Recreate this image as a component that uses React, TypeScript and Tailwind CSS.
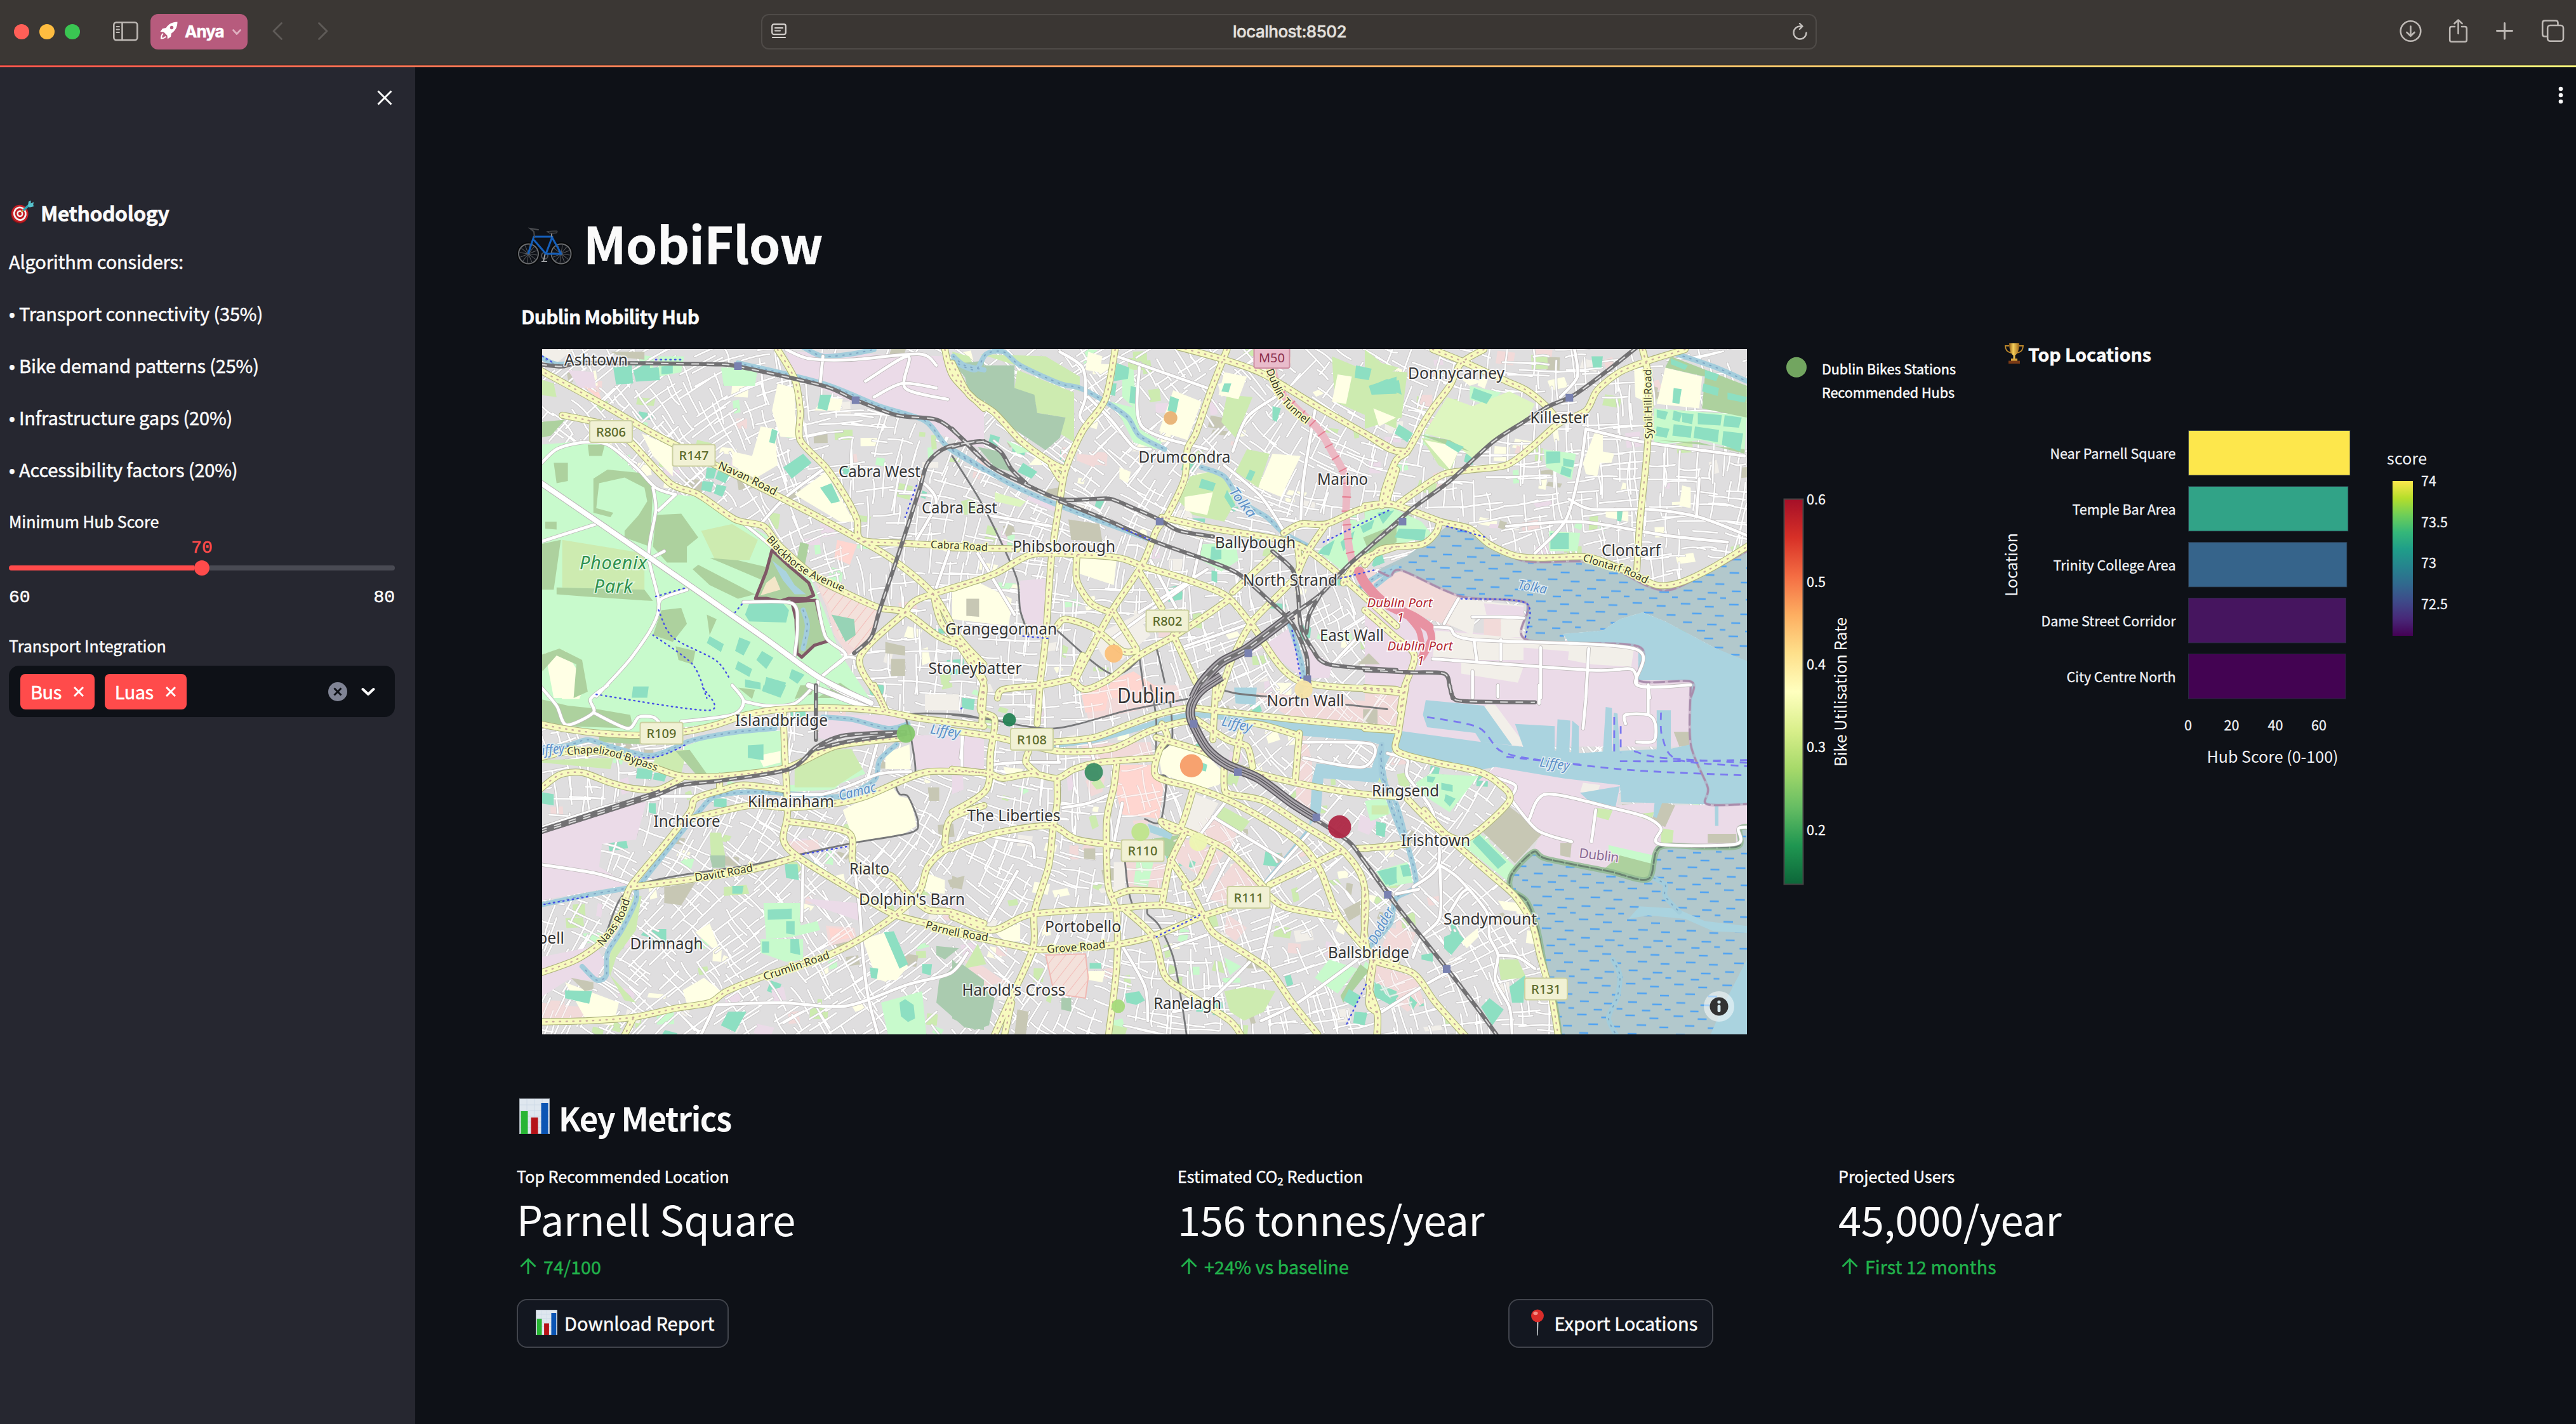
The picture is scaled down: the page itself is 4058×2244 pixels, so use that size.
import type { ReactNode } from "react";

/* ------------------------------------------------------------------ */
/* Map drawing                                                         */
/* ------------------------------------------------------------------ */

type TileId = "A" | "B" | "C" | "D" | "E" | "F";

// Each tile has its own finer coordinate system inside the map's plane.
const ORIGIN: Record<TileId, [number, number]> = {
  A: [850, 540],
  B: [1500, 540],
  C: [2150, 540],
  D: [850, 1080],
  E: [1500, 1080],
  F: [2150, 1080],
};

function points(tile: TileId, text: string): [number, number][] {
  const [ox, oy] = ORIGIN[tile];
  return text.split(" ").map((pair) => {
    const [x, y] = pair.split(",").map(Number);
    return [ox + x / 2.24, oy + y / 2.8];
  });
}

const r1 = (n: number) => Math.round(n * 10) / 10;

function polygon(tile: TileId, text: string) {
  return "M" + points(tile, text).map(([x, y]) => `${r1(x)},${r1(y)}`).join("L") + "Z";
}

function curve(tile: TileId, text: string) {
  const p = points(tile, text);
  let d = `M${r1(p[0][0])},${r1(p[0][1])}`;
  for (let i = 0; i < p.length - 1; i++) {
    const a = p[i - 1] ?? p[i];
    const b = p[i];
    const c = p[i + 1];
    const e = p[i + 2] ?? c;
    const k = 7;
    d += `C${r1(b[0] + (c[0] - a[0]) / k)},${r1(b[1] + (c[1] - a[1]) / k)} ${r1(c[0] - (e[0] - b[0]) / k)},${r1(c[1] - (e[1] - b[1]) / k)} ${r1(c[0])},${r1(c[1])}`;
  }
  return d;
}

type Shapes = Partial<Record<TileId, string[]>>;

function join(shapes: Shapes, build: (tile: TileId, text: string) => string) {
  return (Object.keys(shapes) as TileId[])
    .flatMap((tile) => (shapes[tile] ?? []).map((s) => build(tile, s)))
    .join("");
}

function random(seed: number) {
  let s = seed;
  return () => {
    s = (s * 1664525 + 1013904223) % 4294967296;
    return s / 4294967296;
  };
}

function sideStreets() {
  const rnd = random(11);
  let d = "";
  for (let y = 540; y < 1650; y += 21) {
    for (let x = 840; x < 2770; x += 25) {
      if (rnd() < 0.1) continue;
      const base = 0.55 * Math.sin(x / 260 + y / 520) + 0.5 * Math.cos(y / 190 - x / 700);
      const turn = rnd() < 0.5 ? 0 : Math.PI / 2;
      const t = base + turn + (rnd() - 0.5) * 0.12;
      const len = 22 + rnd() * 48;
      const px = x + rnd() * 12;
      const py = y + rnd() * 12;
      const qx = px + Math.cos(t) * len;
      const qy = py + Math.sin(t) * len;
      const bend = (rnd() - 0.5) * 10;
      d += `M${r1(px)},${r1(py)}Q${r1((px + qx) / 2 + bend)},${r1((py + qy) / 2 - bend)} ${r1(qx)},${r1(qy)}`;
    }
  }
  return d;
}

const PATCH_COLOURS = ["#c8facc", "#8ddfc2", "#cdebb0", "#ffffe5", "#f2dad9", "#ebdbe8", "#c7c7b4", "#f2efe9", "#ffffe5", "#cdebb0"];

function patches() {
  const rnd = random(5);
  return PATCH_COLOURS.map((fill) => {
    let d = "";
    for (let i = 0; i < 62; i++) {
      const x = 850 + rnd() * 1900;
      const y = 545 + rnd() * 1085;
      const w = 7 + rnd() * 22;
      const h = 6 + rnd() * 18;
      const k = (rnd() - 0.5) * 12;
      d += `M${r1(x)},${r1(y)}l${r1(w)},${r1(k)}l${r1(-k)},${r1(h)}l${r1(-w)},${r1(-k)}Z`;
    }
    return { fill, d };
  });
}

const COMMERCIAL: Shapes = {
  A: ["975,1060 1190,1180 1170,1300 1090,1380 1040,1290 1010,1160"],
  B: ["440,490 520,500 500,550 440,520", "1440,1000 1480,1000 1568,1100 1568,1200"],
  C: ["80,1030 130,1005 340,1120 300,1250 130,1180 40,1090", "420,1210 480,1215 480,1300 420,1290"],
  D: ["1010,1060 1110,1070 1120,1120 1020,1150", "0,1400 150,1420 160,1490 0,1470", "870,690 980,680 990,720 900,740"],
  E: ["450,0 800,0 800,60 720,90 620,120 480,150", "450,260 700,250 710,320 500,340", "610,780 760,790 730,900 620,910", "900,580 1010,640 980,720 830,640", "950,850 1010,760 1090,890 1000,980 900,940", "1060,30 1568,80 1568,190 1200,150", "330,1190 470,1185 480,1290 470,1380 360,1360", "40,1210 110,1240 190,1310 100,1330", "1230,170 1270,330 1270,600 1215,520 1210,250", "470,420 540,400 530,470 490,490", "780,660 960,740 900,860 780,770", "970,1010 1040,1070 1000,1130 960,1090"],
  F: ["30,1230 180,1290 210,1400 150,1440 40,1330", "90,1070 180,1090 150,1200 60,1150", "0,10 120,20 110,180 0,180"],
};

const RETAIL: Shapes = {
  A: ["1050,870 1120,890 1095,980 1040,950", "155,190 210,220 220,260"],
  E: ["580,350 710,350 720,390 750,410 730,590 680,580 600,570 580,480", "450,0 560,0 540,110 470,120"],
  B: ["550,1568 560,1490 640,1450 780,1568"],
  D: ["1020,1070 1100,1080 1110,1110 1030,1130"],
};

const LAND: { fill: string; shapes: Shapes }[] = [
  {
    fill: "#ebdbe8",
    shapes: {
      A: ["870,40 1440,60 1568,310 1568,470 1400,400 1330,320 1100,260 900,150", "100,120 190,130 200,200 140,200"],
      B: ["0,230 60,260 50,330 0,300", "240,1050 330,1040 325,1250 280,1280 240,1180", "1060,1370 1200,1250 1240,1480 1100,1350", "1255,1350 1340,1420 1330,1480 1255,1480", "280,670 380,720 370,750 260,690"],
      C: ["0,1150 200,1220 240,1260 560,1300 965,1340 965,1490 1150,1490 1150,1600 0,1600"],
      D: ["980,230 1000,130 1290,130 1290,200 1010,240", "1310,220 1568,220 1568,370 1330,370", "0,650 380,500 340,680 220,700 210,800 310,880 0,950", "930,940 1120,960 1130,1040 990,980", "0,1200 200,1150 230,1220 200,1300 100,1300 0,1380"],
      E: ["0,210 30,210 40,460 0,480", "1440,570 1500,600 1470,660 1430,640"],
      F: ["130,0 1150,0 1150,270 130,270", "400,420 460,360 905,440 890,530 1025,515 1030,580 1090,530 1400,525 1400,620 1320,625 1310,705 1040,710 1020,850 870,810 640,760 595,730 620,650 520,510 500,430"],
    },
  },
  { fill: "#f2dad9", shapes: COMMERCIAL },
  { fill: "#ffd6d1", shapes: RETAIL },
  {
    fill: "#f2efe9",
    shapes: {
      A: ["0,30 120,30 60,90 0,90"],
      B: ["490,1300 650,1200 700,1290 600,1400 540,1400", "640,1180 700,1200 650,1280"],
      C: ["330,1130 560,1160 560,1300 480,1300 480,1210 390,1210 380,1290 290,1240", "250,1270 950,1350 940,1430 800,1420 720,1400 400,1400 240,1385", "340,1410 560,1430 540,1500 340,1460"],
      D: ["1360,40 1480,40 1480,110 1360,110"],
      E: ["840,470 940,520 880,650 810,620", "570,780 610,780 610,900 570,900"],
      F: ["430,85 460,85 570,270 515,265 410,110", "770,430 830,440 820,480 760,470"],
    },
  },
  {
    fill: "#ebdbe8",
    shapes: { C: ["560,1360 560,1345 720,1362 715,1425 560,1405", "420,1150 560,1165 560,1205 430,1205"] },
  },
  {
    fill: "#c8facc",
    shapes: {
      A: ["0,450 150,435 240,450 330,560 420,640 480,670 560,680 700,780 800,850 860,920 960,1050 1010,1200 1060,1370 1170,1580 0,1580", "640,110 770,110 760,190 650,190", "420,60 510,60 500,130 420,150"],
      B: ["560,260 650,290 660,380 740,440 720,470 640,440 600,340", "1290,920 1430,790 1568,720 1568,900 1440,960 1380,1010", "870,890 1000,880 1010,960 950,1010 880,960", "190,430 280,480 230,490", "600,100 640,120 650,300 600,240"],
      C: ["0,740 100,730 200,790 240,850 150,880 0,920", "1020,290 1348,320 1340,480 1190,430 1020,450", "650,830 760,840 750,920 650,920", "630,470 745,490 730,605 640,550", "370,190 480,220 440,280 370,250"],
      D: ["0,0 1090,0 1180,100 990,90 860,95 700,130 600,170 350,210 200,200 0,150", "510,270 620,220 850,200 860,350 650,400 590,400 510,290", "790,960 930,960 920,1060 980,1040 990,1080 890,1110 800,1120", "1205,1400 1350,1350 1365,1545 1230,1545", "880,440 1050,440 1150,390 1130,350 1040,460 880,470", "780,1120 930,1120 930,1210 870,1220 780,1180"],
      E: ["1330,1210 1430,1250 1360,1360 1280,1290", "650,780 710,780 690,890 640,880", "960,1200 1020,1240 980,1280"],
      F: ["180,430 230,390 400,400 300,560 200,480", "395,640 530,800 500,860 340,700", "40,820 150,780 170,870 70,890", "0,510 70,500 100,560 20,600", "860,705 1020,750 1015,790 860,740"],
    },
  },
  {
    fill: "#cdebb0",
    shapes: {
      A: ["80,870 370,930 370,1090 80,1080", "570,830 680,800 770,870 740,960 620,960", "0,160 50,180 60,240 0,230"],
      B: ["100,50 330,60 450,150 450,215 300,130", "230,120 430,220 430,440 380,400 400,330 300,310 290,240 220,200", "840,590 940,560 1010,680 960,790 850,760 800,700", "1040,470 1120,490 1080,640 1000,570", "970,230 1060,240 1000,420 950,350", "1340,60 1568,180 1568,380 1350,260", "0,40 60,60 80,110 10,110"],
      C: ["0,120 150,130 130,330 0,380", "200,420 340,450 300,570 260,540", "0,30 60,90 120,110 0,200"],
      D: ["330,930 360,930 340,1080 270,1200 250,1280 340,1400 300,1390 240,1260 250,1180", "900,370 980,290 1100,280 1140,370 1040,450 900,450", "600,650 640,650 655,750 605,750", "420,290 520,285 500,390 400,345", "650,890 730,880 740,920 650,930", "0,330 260,320 250,370 0,340"],
      E: ["950,530 1050,600 1020,650 930,590", "960,1350 1040,1330 1140,1350 1100,1440 1030,1480 980,1440", "90,1140 120,1230 40,1250", "490,430 520,410 540,450 510,460", "1480,530 1540,530 1540,570 1480,570"],
      F: ["470,1210 540,1210 570,1290 480,1300", "815,540 875,550 860,595 815,580", "1045,630 1090,640 1085,695 1045,695", "910,465 980,465 990,515 905,510", "945,570 1020,560 1010,600"],
    },
  },
  { fill: "#def6c0", shapes: { C: ["210,400 290,240 380,280 510,215 600,270 570,340 490,400 380,510 300,430"], B: ["150,660 260,700 240,725 150,700"] } },
  {
    fill: "#ffffe5",
    shapes: {
      A: ["840,180 900,200 905,420 850,415 820,300", "360,400 470,460 470,590 400,500", "780,370 830,380 840,540 760,600 680,540 680,480 750,500", "900,670 1010,570 1110,790 1060,790", "1000,240 1070,250 1060,300 970,300", "20,1370 90,1360 150,1480 130,1568 50,1568", "1450,1130 1568,1080 1568,1140"],
      B: ["780,210 880,260 830,430 730,390", "1130,490 1230,500 1160,680 1080,640", "960,130 1040,150 1010,250 940,230", "0,1100 80,1050 210,1130 200,1250 0,1220", "450,950 580,960 570,1070 450,1020", "480,40 530,60 520,130 470,120", "820,680 920,660 900,760 820,740", "590,550 630,570 620,620 590,600", "300,500 320,540 270,540", "1360,140 1410,150 1390,270 1340,260"],
      C: ["1060,110 1190,150 1180,290 1030,270", "810,400 840,400 840,480 880,490 870,530 830,530 820,590 780,580 770,530", "950,110 990,120 990,260 955,240", "210,430 290,450 330,480 300,560", "30,290 110,330 50,370", "1120,630 1150,640 1150,730 1110,720", "850,740 930,740 930,790 850,770", "330,150 420,170 370,190"],
      D: ["1070,550 1240,440 1270,490 1310,500 1330,620 1280,660 1110,690", "1140,1120 1220,1090 1300,1240 1260,1300 1190,1300", "505,1345 580,1290 640,1350 590,1400 520,1405", "550,1090 600,1050 630,1150 610,1160", "90,1310 280,1400 260,1500 170,1490", "1370,830 1430,860 1430,920 1360,910", "1220,300 1305,260 1310,370 1220,370", "770,310 850,290 850,340 790,360", "50,0 160,0 140,60 80,60"],
      E: ["725,290 780,260 900,310 970,400 940,440 880,460 740,390", "150,1090 240,1050 240,1130 190,1130", "180,360 250,370 240,400 190,390", "480,1260 540,1260 530,1310 480,1300"],
      F: ["470,950 540,960 545,1000 490,990", "0,920 40,930 30,960", "340,1130 400,1070 400,1110 360,1160"],
    },
  },
  {
    fill: "#add19e",
    shapes: {
      A: ["190,600 240,560 360,575 400,640 390,900 300,860 300,830 350,760 380,700 370,640 300,595 210,620 200,730 260,750 250,770 190,750", "410,760 500,755 560,860 520,900 520,970 450,970 400,900", "0,890 75,870 50,1090 0,1090", "60,1080 370,1090 400,1140 160,1120 60,1110", "560,980 760,1110 700,1130 600,1070 540,1000", "430,1180 500,1170 520,1240 470,1320 400,1290", "50,530 100,530 100,610 60,620", "170,450 230,450 220,500 175,500", "480,1340 550,1360 540,1420 490,1400", "0,1380 70,1350 150,1400 170,1540 120,1568 130,1420 60,1380 10,1450", "590,1200 625,1220 600,1290", "20,790 60,790 60,825 20,820", "0,350 90,340 40,410 0,420", "600,950 700,960 800,990 790,1050 640,970", "920,880 950,890 935,990 905,970", "1140,1568 1060,1500 980,1568"],
      B: ["1450,860 1568,800 1568,880 1480,950"],
      C: ["1080,60 1348,190 1348,330 1190,290 1200,150 1060,110", "1030,430 1340,470 1340,490 1180,440", "190,405 300,430 370,480 290,450"],
      D: ["0,60 100,90 180,100 320,130 330,190 90,180 0,160", "480,290 530,285 590,390 550,390", "700,10 760,20 750,60", "920,0 970,0 960,40 900,60", "210,225 380,230 360,260 210,250"],
      E: ["690,680 800,660 770,760 750,750", "1440,1230 1470,1260 1380,1400 1370,1370"],
      F: ["900,750 1020,790 1005,855 840,815"],
    },
  },
  {
    fill: "#aacbaf",
    shapes: {
      B: ["10,100 220,100 220,200 290,230 300,310 400,330 380,420 330,475 170,340 70,190", "90,460 170,480 210,570 150,550"],
      A: ["1490,90 1568,80 1568,290 1510,200"],
      D: ["1480,1220 1568,1300 1568,1520 1500,1510 1400,1400 1410,1300", "600,750 655,750 655,805 610,805", "1400,1150 1480,1160 1430,1210 1400,1190"],
      E: ["0,1210 150,1380 130,1500 80,1520 0,1470", "385,1380 420,1380 420,1440 385,1430"],
    },
  },
  {
    fill: "#c7c7b4",
    shapes: {
      F: ["500,525 630,650 530,785 410,640", "1040,510 1095,530 1060,625 1010,600", "1090,205 1145,205 1145,270 1110,270", "1210,655 1310,655 1310,695 1210,695", "690,695 730,695 725,760 690,750", "0,105 45,110 45,175 0,165"],
      D: ["440,890 550,870 500,970 440,960", "110,1290 190,1310 190,1340 160,1350", "1440,860 1500,840 1490,900 1450,890", "1370,450 1410,450 1410,510 1375,510"],
      A: ["1220,1320 1290,1340 1290,1380 1220,1370", "1240,1395 1290,1395 1290,1470 1240,1470", "1510,1130 1550,1130 1550,1210 1510,1200", "250,40 370,40 370,75 290,65"],
      B: ["50,1130 95,1130 95,1210 50,1205", "1470,1370 1510,1420 1430,1420", "410,780 520,800 530,880 420,870"],
      E: ["0,840 40,860 0,900", "1380,990 1440,950 1440,1010 1400,1040", "230,1430 270,1440 260,1540 220,1540", "1450,105 1500,105 1500,170 1450,165", "465,720 505,720 505,770 465,765"],
    },
  },
  {
    fill: "#8ddfc2",
    shapes: {
      A: ["260,110 325,100 330,180 270,185", "330,120 420,108 425,165 340,172", "430,105 470,100 470,135 430,140", "990,230 1030,230 1015,300 980,290", "590,550 625,555 615,600 585,600", "630,565 670,585 655,620 620,600", "575,610 615,615 605,660 570,650", "625,625 660,635 645,680 615,665", "860,550 930,490 960,530 890,600", "990,640 1030,620 1060,700 1030,710", "740,1150 860,1150 880,1180 870,1235 740,1230 725,1200", "600,1295 650,1330 640,1365 590,1325", "705,1300 745,1320 720,1380 690,1360", "785,1360 825,1390 800,1440 765,1400", "700,1405 750,1440 740,1475 690,1440", "725,1485 780,1500 780,1530 725,1520", "800,1475 870,1500 850,1560 790,1530", "890,1440 935,1465 910,1505 880,1480", "1060,1200 1120,1240 1090,1310", "1070,1200 1115,1220 1090,1290 1050,1240", "820,380 840,390 830,445 810,440"],
      B: ["580,90 625,110 620,160 570,170", "555,180 580,180 575,235 555,230", "630,190 655,200 650,270 625,265", "770,235 800,250 790,310 760,300", "250,530 300,570 280,600 230,570", "880,600 930,620 920,655 870,640", "970,650 1000,720 985,730 960,680", "960,180 985,180 975,220 950,215", "1425,100 1480,115 1470,165 1420,155", "1470,190 1568,150 1568,225 1480,230", "1130,280 1160,290 1145,350 1130,340", "1050,560 1070,570 1055,610 1035,600", "1310,900 1350,870 1330,940 1290,930", "1370,880 1420,830 1410,880 1380,920", "1440,810 1490,780 1480,820 1450,840", "1500,750 1560,740 1520,800", "1490,950 1520,930 1510,980 1480,985", "915,900 950,900 950,955 910,960", "915,1005 935,1010 935,1060 915,1050"],
      C: ["100,170 120,165 130,230 80,200", "20,190 80,160 90,220 30,230", "385,200 450,230 430,270 375,245", "120,360 170,400 150,440 105,400", "1090,200 1118,205 1110,270 1085,265", "640,480 690,480 690,530 640,535", "700,510 740,520 735,550 700,545", "695,545 730,560 725,595 690,580", "1030,295 1070,305 1060,340 1030,330", "1090,300 1120,310 1110,350 1085,340", "1120,310 1160,315 1155,360 1120,350", "1175,310 1260,320 1255,365 1175,360", "1270,320 1330,330 1320,375 1265,370", "1090,360 1155,370 1150,420 1085,410", "1165,370 1250,385 1245,440 1160,420", "1265,390 1335,400 1325,480 1260,450", "1030,370 1075,380 1065,420 1025,410", "1195,180 1250,200 1245,235 1190,215", "1280,220 1348,240 1340,265 1280,250", "1080,70 1140,100 1130,120 1080,95", "1200,120 1250,140 1240,170 1200,155", "120,820 215,825 210,875 105,860", "655,840 720,840 720,910 655,910", "890,740 910,740 905,790 890,785", "290,430 350,460 330,485 285,450", "30,950 60,930 70,970 30,990", "800,60 840,60 835,110 805,110"],
      D: ["790,0 870,0 850,55 785,25", "330,5 385,5 380,55 325,55", "735,265 790,260 790,330 735,320", "345,365 400,370 395,415 340,410", "405,385 450,390 440,425 400,415", "805,990 890,985 890,1030 805,1035", "870,1040 900,1040 900,1100 870,1095", "785,1130 810,1130 810,1180 785,1180", "885,1120 915,1120 920,1190 885,1180", "865,790 910,790 915,860 870,850", "385,520 410,520 410,570 385,560", "615,500 660,500 660,540 615,535", "1215,1090 1250,1085 1300,1230 1270,1250", "90,1345 185,1350 175,1405 90,1380", "665,1440 730,1440 690,1530 640,1500", "1270,1400 1290,1385 1320,1410 1325,1470 1300,1485 1275,1460", "1350,1230 1385,1230 1380,1280 1350,1270", "0,470 50,480 50,530 0,520", "680,885 720,885 715,920 680,920", "1490,55 1530,60 1525,90 1490,90", "1165,1245 1195,1250 1190,1295 1170,1290"],
      E: ["35,60 80,60 75,110 35,100", "880,340 900,350 895,380 880,375", "610,1360 660,1350 680,1390 650,1410 615,1400", "1490,1310 1568,1350 1568,1410 1490,1370", "1420,1440 1465,1445 1455,1500 1415,1490", "1400,1340 1440,1370 1420,1420 1380,1390", "1500,820 1568,800 1568,870 1530,880", "370,1210 390,1210 390,1240 370,1240", "485,1225 525,1225 525,1250 485,1250", "840,770 860,780 850,810 835,800"],
      F: ["400,655 500,780 470,810 380,690", "75,820 105,810 115,870 85,885", "125,795 155,790 165,840 135,845", "280,1110 325,1085 350,1120 305,1190 280,1160", "410,1420 440,1380 490,1430 450,1500", "40,1310 120,1370 90,1410 30,1370", "510,1330 565,1280 560,1400 520,1400", "160,1370 185,1400 170,1430 155,1410", "220,400 250,405 240,430 220,425", "270,430 310,440 310,470 270,460", "285,480 320,500 300,535 280,510", "40,600 75,610 70,670 40,660", "200,1190 240,1180 240,1220 200,1210"],
    },
  },
];

const MUD: Shapes = {
  C: ["290,810 350,820 430,870 530,950 600,968 760,965 860,985 1000,1075 1060,1090 1200,1020 1400,870 1400,1450 1240,1350 1060,1230 980,1190 900,1220 840,1270 700,1285 710,1325 565,1315 570,1150 340,1120 130,1005 80,1030 50,1000 150,940"],
  F: ["595,735 640,765 860,820 1000,855 1040,715 1200,720 1325,705 1325,625 1400,620 1400,1568 690,1568 670,1400 640,1280 610,1080 570,950 515,900 520,830"],
};

const WATER: Shapes = {
  C: ["700,1285 840,1270 900,1220 980,1190 1060,1230 1240,1350 1400,1430 1400,1580 1150,1580 1150,1490 965,1490 965,1340 720,1325"],
  F: [
    "0,170 120,200 410,250 560,272 760,300 860,290 1080,280 1150,260 1150,0 1400,0 1400,525 1210,525 905,515 900,440 700,410 460,360 380,380 250,330 130,290 50,260 0,240",
    "215,65 420,90 520,265 410,250 390,210 220,185 205,130",
    "530,170 670,180 670,290 560,275",
    "680,150 725,155 722,295 675,295",
    "732,155 755,180 755,300 728,300",
    "850,95 872,100 872,300 840,300",
    "878,120 892,125 900,300 875,300",
    "1030,110 1080,110 1080,285 1030,285",
    "930,1030 970,975 1100,985 1200,1040 1400,1070 1400,1095 1230,1085 1130,1030 1000,1015",
    "1400,1120 1348,1210 1270,1400 1210,1568 1400,1568",
    "760,475 900,445 885,535 790,510",
    "1235,530 1248,530 1248,620 1236,620",
    "1022,520 1050,515 1030,585 1018,580",
  ],
  E: [
    "340,262 500,235 650,180 760,135 850,118 1000,130 1210,165 1568,205 1568,262 1500,250 1210,220 940,150 850,140 760,160 620,215 500,255 340,280",
    "1510,245 1568,250 1500,430 1310,410 1300,560 1260,620 1270,420 1285,345 1480,365",
    "690,610 780,650 770,680 700,650",
    "995,10 1075,10 1070,85 1000,80",
  ],
  A: ["820,960 870,1010 900,1070 940,1110 900,1110 860,1050"],
};

const RIVERS: Shapes = {
  A: ["0,60 60,95 160,85", "700,90 1000,180 1200,280 1360,345 1440,460 1568,560", "930,20 1000,60 1100,50 1180,30", "1460,60 1500,100 1568,120", "930,1180 945,1250 930,1350"],
  B: ["0,80 80,120 120,50 180,40 240,100 380,180 450,200 540,260 620,330 660,410 750,470", "880,550 960,590 1020,700 1110,770 1170,840 1260,900", "0,470 200,620 380,720 700,870", "1190,1240 1230,1400 1240,1490 1220,1568", "1440,1080 1500,1030 1568,990"],
  C: ["1100,50 1240,110 1348,170", "40,1070 90,1020"],
  D: ["0,280 100,265 170,240 250,270 380,310 450,290 520,250 600,225 700,205 830,190", "1000,140 1100,150 1230,190 1300,170", "0,970 150,930 310,895", "340,900 340,950 290,1080 240,1180 235,1280 200,1300 150,1240", "360,870 480,680 560,560 620,490 750,470 900,480 1060,490 1180,420 1200,330 1260,260", "930,765 1130,925"],
  E: ["1510,300 1540,500 1600,700", "1260,640 1100,880"],
  F: ["60,260 60,400 110,520 150,700 180,880 110,940 90,1050 20,1150", "1020,850 1060,880 1060,930 1110,1000", "875,1210 900,1280 890,1380 860,1470 900,1568"],
};

const STREETS: Shapes = {
  A: ["0,540 60,470 150,440 240,450 340,550 410,640 480,670", "400,640 410,740 385,940 420,1180 330,1380 200,1560", "480,670 420,740", "0,880 200,800", "980,1140 1010,1300 1080,1380 990,1480 975,1568", "720,1145 890,1150 910,1250 900,1380", "780,800 870,680 1010,550", "1340,600 1400,700 1330,870", "1400,1080 1450,900", "870,30 950,70 1100,75 1340,50 1400,100", "990,1480 1080,1390 1130,1400", "420,1180 430,1130 520,1090", "380,960 440,920", "560,680 700,780 820,900", "1150,170 1300,60 1290,200 1440,250", "1180,240 1280,180 1400,200", "1000,60 990,180"],
  B: ["380,40 460,110 470,240 450,320 470,360", "480,240 560,340 640,460 700,470", "580,60 900,200", "960,540 1090,680 1170,830", "1140,240 1040,330 990,480", "880,870 850,1040", "660,1190 900,1000", "560,1310 680,1200 850,1050", "790,1170 700,960", "1050,1240 820,1340", "660,110 670,370 900,470", "1340,1420 1460,1260", "120,760 350,810", "90,930 220,1200", "1280,300 1240,600 1230,780"],
  C: ["740,30 750,150 690,240", "720,690 800,735 1000,735 1180,770 1348,850", "780,380 760,550 710,780 600,930", "240,1255 300,1260 380,1310 950,1350 960,1510 1150,1510", "385,1310 395,1400", "240,1395 800,1445 940,1440 960,1510", "480,1310 480,1400", "280,1240 330,1130", "620,1345 620,1568", "1000,1510 1005,1568", "790,1350 780,1568", "780,380 990,440 1340,500", "500,810 760,790 1060,850 1280,880", "380,1210 480,1210 560,1215", "1180,600 1170,770", "380,1450 380,1568"],
  D: ["0,0 60,90 95,175 190,120 180,60 240,0", "190,120 310,190 350,140 400,140 420,160", "500,160 680,130 720,70 680,0", "720,70 800,90 900,80 970,0", "1020,0 1170,100", "430,490 560,490", "880,480 1000,480 1100,440 1200,390 1310,380", "930,770 925,1040", "1110,790 1130,1000 1140,1180 1160,1380 1200,1568", "620,1410 850,1400 1080,1415 1300,1320 1450,1270 1510,1180", "560,1568 620,1410", "0,630 250,530 420,500", "1190,260 1160,400", "1490,220 1490,370", "0,790 200,830 330,880"],
  E: ["140,350 240,340 380,340", "40,200 30,320", "480,230 500,330", "390,540 480,520 560,480", "920,580 1170,770", "980,490 880,650", "1100,880 1260,650", "130,1040 230,820", "600,1150 680,1330 690,1480", "900,1100 740,1170", "1050,1220 900,1400 780,1440", "1430,1210 1220,1400 1090,1480", "1140,960 1090,1230", "60,650 200,680 280,700 290,760", "370,250 375,340", "1240,250 1480,260 1450,360 1240,320", "600,520 560,760", "900,950 960,800 1010,700"],
  F: ["520,510 610,640 730,690", "580,590 640,480 870,540 990,580 1045,630 1040,700 1310,700 1320,630 1400,630", "80,300 150,330 150,400 240,560 260,790 170,890", "260,790 330,850 430,1000 440,1110 470,1190 460,1300 510,1420 520,1540", "265,800 265,1020 200,1110 170,1200", "470,1190 540,1200 600,1250", "1000,0 1000,130", "920,170 920,130 1000,130 1025,170 1020,245 960,250", "780,60 770,190", "420,390 530,440 510,500", "60,1440 290,1270 340,1330", "615,0 615,80", "470,0 470,50", "380,0 380,50", "190,900 110,920", "300,1000 340,920 360,900", "815,550 800,690"],
};

const AVENUES: Shapes = { A: ["0,615 390,950 790,1300 990,1480 1170,1590"], D: ["950,0 1180,110"] };

const MAIN_ROADS: Shapes = {
  A: ["0,120 220,270 400,400 620,540 830,670 1000,780 1130,870 1250,960 1390,1110 1480,1300 1568,1420", "80,320 160,340 250,370 330,450 460,620 560,670 690,780 790,810 850,900 980,1040 1090,1110 1200,1170 1290,1190 1400,1290 1470,1330", "840,30 900,160 920,300 920,430 1010,550 1080,680 1120,780 1135,870 1280,885 1568,905", "1290,1190 1130,1390 1200,1568 1220,1620", "1290,1190 1340,1130 1568,1040", "1430,30 1460,150 1568,290", "1390,1110 1420,1240 1520,1380 1568,1490"],
  B: ["0,90 60,230 150,310 240,430 350,530 400,560", "575,30 540,250 460,390 400,560 380,700 350,950 330,1300 310,1500", "970,30 910,220 860,400 830,470 820,600 760,760 720,830 670,980 560,1190 470,1400 430,1500", "800,20 960,75 1100,140 1300,290 1568,480", "740,770 900,815 1160,870 1260,920 1400,1060 1568,1250", "0,905 230,910", "0,1085 150,1020 280,935 440,935 590,950 670,985 840,1050 970,1120 1060,1250 1220,1490 1568,1530", "1170,840 1230,800 1320,800 1430,740 1530,710 1568,720", "1530,710 1568,560", "1320,800 1250,930 1200,1050 1060,1230 990,1390 940,1568", "660,1010 740,1170", "370,1250 400,1220 500,1260 600,1360 650,1360", "570,1190 650,1350", "980,1130 900,1200 790,1290 660,1380 560,1480 470,1530 430,1480 460,1380", "440,940 440,1050 490,1150 560,1190", "1130,940 990,1100", "1220,910 1225,1000 1200,1050", "780,1290 860,1500", "0,1290 60,1400 110,1500 110,1568", "160,1568 180,1530 320,1510 430,1480", "1380,1060 1440,960 1568,900", "350,540 380,600"],
  C: ["240,30 340,80 500,170 570,210 640,280 680,340", "420,30 340,90 300,190 240,290 200,370 150,480 110,520 70,650 60,720", "0,400 90,470 150,480", "1130,30 1000,80 900,130 820,210 780,300 680,360 590,460 500,540 380,560 280,580 200,640 120,710", "980,30 1000,150 1000,400 990,560 970,800 960,1000", "0,720 100,715 270,790 370,820 440,890 530,940 620,950 780,945 870,980 960,1030 1030,1070 1110,1060 1230,990 1400,860", "0,980 60,910 200,890 250,840 265,790", "0,1180 100,1290 175,1380 140,1520 125,1620", "0,1530 140,1545"],
  D: ["0,170 80,190 200,210 350,220 510,205 620,175 730,130 860,105 1050,100 1210,115 1340,145 1568,180", "0,320 110,290 250,300 400,360 500,400 650,400 850,370 920,340 1040,270 1170,245 1300,230", "0,460 70,395 150,385 250,430 330,455 420,460 500,410", "860,120 865,300 875,560 860,680 910,755 1110,910 1250,1010 1400,1060 1568,1110", "0,1270 130,1210 230,1120 290,1000 320,890 430,720 530,560 550,500 650,460 720,440 870,460", "320,890 540,855 760,810 900,760", "530,590 740,530 880,540 1050,520 1150,490 1280,420 1380,380 1568,385", "880,600 1090,650 1110,790 1240,840 1300,920 1370,990 1450,1000 1568,1050", "0,1485 170,1480 330,1465 480,1425 600,1400 660,1350 800,1280 1000,1200 1130,1120 1260,1010 1340,910 1370,800 1440,720 1568,670", "330,1470 290,1568", "1568,530 1450,590 1430,700", "635,400 635,450", "1180,0 1220,110", "1568,0 1560,180"],
  E: ["0,370 130,390 180,410 280,390 370,410 430,370 520,340 720,320", "110,0 100,110 150,150 135,300 120,460 0,560", "310,0 300,170", "370,410 370,520 355,640 340,800 290,1000 285,1160 200,1400 140,1568", "0,200 160,230 370,290 560,280 700,200 800,165 850,155", "360,250 500,230 620,175 720,130 830,100 920,110 1200,150 1568,195", "930,0 920,240", "740,170 760,230 730,290 720,400 850,450 960,500 1100,590 1230,700 1300,820 1360,1010 1450,1150 1480,1180", "720,230 880,290 960,340 1050,380 1250,440 1450,480 1568,490", "860,150 970,240 1040,270 1060,360", "1000,330 1040,170 1220,220", "960,340 960,450 980,480 1100,510 1230,610 1370,720 1440,830 1460,950 1450,1150", "580,350 570,450 545,600 550,880 580,1000 580,1250 550,1560", "0,720 70,680 200,640 350,620 440,680 600,710", "850,460 800,640 740,600 930,700 1000,760 1100,890", "1430,720 1568,710", "1370,730 1120,880", "820,650 770,780 740,970", "770,770 830,880 880,1000 920,1090 1030,1180 1120,1260 1200,1400 1290,1540", "920,720 870,860 820,890", "570,930 630,905 740,910", "0,1020 140,1080 280,1010 570,985 740,970 880,1010", "1120,930 1180,980 1350,1020", "980,980 880,1020 700,1110 540,1150 340,1165 270,1160 0,1090", "610,990 710,1110 750,1280 820,1350 980,1480 1030,1568", "1225,210 1210,430", "1490,1190 1470,1400 1500,1450 1500,1560", "1480,1180 1568,1220", "270,290 260,340 300,390", "210,1400 180,1568"],
  F: ["0,10 140,25", "145,0 120,200 115,290 250,340 400,380 470,430 510,510 370,670 290,660 210,550", "0,190 120,200", "150,500 220,590 320,700 440,830 530,930 590,1050 620,1200 660,1380 685,1568", "0,720 150,700", "0,900 0,1100 30,1210 170,1270 250,1400 370,1568", "30,1210 15,1330 45,1450 40,1568"],
};

const RAIL: Shapes = {
  A: ["0,95 80,105 160,90 600,95 700,105 1000,190 1110,250 1260,320 1400,340 1480,410 1568,520", "1568,435 1440,460 1370,530 1340,650 1270,920 1200,1180 1170,1300 1110,1370"],
  B: ["0,380 130,540 250,620 380,690 500,690 560,690 640,730 730,780 800,830 920,855", "0,460 100,435 170,480 210,560 260,620", "380,700 560,790 720,880 900,960 1010,1020 1120,1140 1200,1240 1250,1380 1255,1490", "1568,800 1400,980 1300,1110 1200,1200 1040,1350 950,1410 880,1500", "1130,920 1200,1000 1220,1100 1230,1250 1270,1350 1330,1420 1568,1445", "1300,1110 1260,1200 1250,1280"],
  C: ["960,20 870,110 740,230 650,280 560,350 450,440 300,610 160,740 0,920", "0,1445 160,1455 280,1460 300,1520 310,1568"],
  D: ["0,650 200,570 420,480 500,440 640,420 880,370 980,270 1080,220 1290,205", "0,640 200,560 420,470", "980,280 1100,245 1290,215", "975,0 975,240"],
  E: ["1280,590 1400,690 1450,770 1540,920 1568,970"],
  F: ["0,780 80,920 200,1110 290,1250 400,1430 480,1568", "300,0 310,50 350,70 600,75"],
};

const WIDE_RAIL: Shapes = {
  E: ["950,-40 880,20 850,70 840,120 850,170 900,280 970,350 1080,410 1200,520 1290,590"],
  B: ["1200,1200 1040,1350 950,1410 880,1500 850,1568"],
};

const TRAM: Shapes = {
  B: ["0,500 100,700 180,900 230,1050 240,1180 270,1290", "370,1270 570,1465 700,1345 720,1345 750,1500", "660,1380 680,1568"],
  D: ["1568,150 1490,130 1305,130 1310,220 1325,390 1260,430 1270,480 1300,490 1335,600 1310,650 1110,695 920,745 760,790 330,890 210,1140 0,1275"],
  E: ["0,130 130,150 360,190 620,110 830,60", "700,0 720,150 720,380 755,410 735,600 680,590", "610,780 620,890 640,975 685,980 690,1010 730,1060 780,1200 810,1400 830,1568", "770,80 775,240 720,300", "900,0 1000,35 1120,50", "1390,85 1535,105"],
};

const PATHS: Shapes = {
  A: ["410,1120 520,1080", "420,1180 470,1300 620,1400 670,1480", "400,1290 540,1420 590,1568", "690,1190 720,1145", "1330,630 1290,770", "410,75 510,75", "10,60 50,90"],
  B: ["600,820 700,870", "1310,880 1540,740", "1200,1270 1230,1480", "1370,1040 1500,1000", "250,1295 340,1305"],
  C: ["340,1130 570,1150 565,1310", "290,810 430,860"],
  D: ["200,40 600,110 570,0", "0,970 180,930", "100,270 380,320 520,260", "930,745 1090,710", "1490,100 1480,110"],
  E: ["720,1110 880,1010", "1460,1320 1390,1500"],
};

const FERRIES: Shapes = {
  F: ["220,140 400,185 480,290 620,330 900,370 1100,385 1400,400", "900,335 1100,335 1400,328", "880,140 880,300", "903,180 903,300", "1045,120 1050,230 1110,330 1400,360", "950,290 1050,320 1400,345", "500,315 760,350"],
};

const BOUNDARY: Shapes = {
  C: ["50,1010 90,1030 130,1005 340,1120 570,1150 570,1310 965,1340 965,1490 1150,1495 1150,1568", "290,810 350,820 430,870 530,950 600,968 760,965 860,985 1000,1075 1080,1090 1200,1020 1348,920"],
  F: ["1150,0 1150,260 1210,450 1210,525 1400,520"],
};

const COAST: Shapes = { F: ["1400,625 1325,630 1320,708 1200,715 1040,715 1000,855 860,820 640,765 595,735 520,830 515,900 570,950 610,1080 640,1280 670,1400 690,1568"] };

const STATIONS: [number, number][] = [
  [1162.5, 577], [1347.8, 630.7], [1826.8, 822], [1966.5, 1029.3], [2059.4, 1070.4], [2472.3, 626.8],
  [2209.4, 822], [1880.4, 1140.7], [1950, 1216.8], [2073.7, 1288.2], [2186.2, 1410], [2279, 1527],
];

const PLACES: [string, number, number, number, number?][] = [
  ["Ashtown", 939, 576, 100],
  ["Cabra West", 1385.5, 752, 129],
  ["Cabra East", 1511.5, 809, 119],
  ["Grangegorman", 1577, 1000, 176],
  ["Stoneybatter", 1536, 1062, 147],
  ["Drumcondra", 1866, 729, 145],
  ["Marino", 2115, 764, 80],
  ["Phibsborough", 1676, 870, 162],
  ["Ballybough", 1977.5, 864, 127],
  ["North Strand", 2032.5, 923, 149],
  ["East Wall", 2129.5, 1010, 101],
  ["Dublin", 1806, 1107.5, 92, 33],
  ["North Wall", 2056.5, 1113, 122],
  ["Donnycarney", 2294, 597, 152],
  ["Killester", 2456.5, 667, 92],
  ["Clontarf", 2569.5, 876, 93],
  ["Islandbridge", 1231, 1143.5, 146],
  ["Kilmainham", 1246, 1272, 136],
  ["Inchicore", 1082, 1303, 105],
  ["Rialto", 1369.5, 1377.5, 63],
  ["Dolphin's Barn", 1436.5, 1425.5, 167],
  ["Drimnagh", 1050, 1496, 115],
  ["bell", 868, 1487, 42],
  ["The Liberties", 1597, 1294, 147],
  ["Portobello", 1706, 1468.5, 120],
  ["Harold's Cross", 1597, 1568.5, 163],
  ["Ranelagh", 1870.5, 1590, 107],
  ["Ballsbridge", 2156, 1510, 128],
  ["Ringsend", 2214, 1255, 106],
  ["Irishtown", 2261.5, 1333, 109],
  ["Sandymount", 2347.5, 1457, 147],
];

const ROAD_NAMES: [string, TileId, string, number][] = [
  ["Navan Road", "A", "628,555 720,605 860,695", 17.5],
  ["Blackhorse Avenue", "A", "800,870 860,950 940,1025 1085,1108 1180,1160", 16.5],
  ["Cabra Road", "A", "1380,908 1460,910 1640,925", 16.5],
  ["Dublin Tunnel", "B", "1108,122 1145,230 1200,310 1300,410", 16.5],
  ["Sybil Hill Road", "C", "1016,424 1012,250 1010,60", 16.5],
  ["Clontarf Road", "C", "768,962 850,995 920,1020 1030,1090", 16.5],
  ["Chapelizod Bypass", "D", "98,308 200,300 300,330 450,395", 16.5],
  ["Davitt Road", "D", "550,864 650,845 790,812", 17],
  ["Naas Road", "D", "222,1152 290,1040 330,905", 17],
  ["Crumlin Road", "D", "795,1302 900,1258 1060,1188", 17],
  ["Parnell Road", "D", "1360,1070 1460,1105 1640,1140", 17],
  ["Grove Road", "E", "335,1180 440,1172 600,1150", 17],
];

const WATER_NAMES: [string, number, number, number, number][] = [
  ["Tolka", 2413, 932, 10, 46],
  ["Tolka", 1952, 796, 52, 54],
  ["Liffey", 1488, 1159, 8, 47],
  ["Liffey", 1947, 1148, 12, 48],
  ["Liffey", 2448, 1211, 8, 47],
  ["Camac", 1352, 1254, -14, 60],
  ["Dodder", 2182, 1462, -62, 62],
  ["iffey", 872, 1188, -6, 36],
];

const SHIELDS: [string, number, number][] = [
  ["R806", 962.5, 680], ["R147", 1093, 717.5], ["R802", 1839, 978.5], ["R109", 1042, 1155.5], ["R108", 1625.5, 1165],
  ["R110", 1800, 1340.5], ["R111", 1967, 1414], ["R131", 2435.5, 1558.5],
];

const BIKES: { x: number; y: number; r: number; fill: string }[] = [
  { x: 1844, y: 658.6, r: 10.7, fill: "#e8b274" },
  { x: 1754.5, y: 1030, r: 14.2, fill: "#fbbf78" },
  { x: 2053.6, y: 1086.5, r: 14.2, fill: "#f6e3a6" },
  { x: 1427, y: 1156, r: 14.4, fill: "#85c76d" },
  { x: 1590, y: 1134.3, r: 10.5, fill: "#258255" },
  { x: 1723, y: 1216.8, r: 14.4, fill: "#3a8d63" },
  { x: 1877, y: 1206.8, r: 18.2, fill: "#f79d68" },
  { x: 2110.3, y: 1303, r: 18.2, fill: "#ae2745" },
  { x: 1796.5, y: 1311, r: 14.2, fill: "#bfe48b" },
  { x: 1887.5, y: 1327, r: 14.2, fill: "#edf5b2" },
  { x: 1761.6, y: 1585.7, r: 10.6, fill: "#a5da7a" },
];

const SIDE_STREETS = sideStreets();
const PATCHES = patches();

function DublinMap() {
  const main = join(MAIN_ROADS, curve);
  const streets = join(STREETS, curve);
  const avenues = join(AVENUES, curve);
  const rail = join(RAIL, curve);
  const wideRail = join(WIDE_RAIL, curve);
  const tram = join(TRAM, curve);
  const rivers = join(RIVERS, curve);
  const tunnel = curve("B", "1130,110 1160,220 1290,380 1340,480 1390,600 1390,750 1400,900 1420,1000");
  const line = { fill: "none", strokeLinejoin: "round", strokeLinecap: "round" } as const;
  return (
    <svg viewBox="854 550 1898 1080" className="block h-[1080px] w-[1898px]" fontFamily="'Noto Sans', sans-serif">
      <defs>
        <pattern id="mud" width="76" height="50" patternUnits="userSpaceOnUse" patternTransform="rotate(1)">
          <rect width="76" height="50" fill="#b2c8cc" />
          <path d="M4,5h15M42,9h14M22,20h15M58,23h14M8,34h14M46,37h15M30,47h13M66,45h9" stroke="#4fa3f3" strokeWidth="2.4" />
        </pattern>
        <pattern id="hatch" width="13" height="13" patternUnits="userSpaceOnUse" patternTransform="rotate(38)">
          <rect width="13" height="13" fill="#f3e1db" />
          <path d="M0,0V13" stroke="#f3bcb8" strokeWidth="2" />
        </pattern>
        <clipPath id="centre">
          <path d={join({ E: COMMERCIAL.E, D: COMMERCIAL.D, F: COMMERCIAL.F }, polygon) + join(RETAIL, polygon)} />
        </clipPath>
      </defs>
      <rect x="854" y="550" width="1898" height="1080" fill="#dfdedf" />
      {PATCHES.map((p, i) => (
        <path key={i} d={p.d} fill={p.fill} />
      ))}
      <g {...line}>
        <path d={SIDE_STREETS} stroke="#c9c7c7" strokeWidth="4.2" />
        <path d={SIDE_STREETS} stroke="#ffffff" strokeWidth="2.6" />
      </g>
      {LAND.map((l, i) => (
        <path key={i} d={join(l.shapes, polygon)} fill={l.fill} />
      ))}
      <g {...line} clipPath="url(#centre)" opacity="0.7">
        <path d={SIDE_STREETS} stroke="#e0cdcb" strokeWidth="3.4" />
        <path d={SIDE_STREETS} stroke="#ffffff" strokeWidth="2" />
      </g>
      <path d={polygon("A", "980,1070 1190,1180 1170,1290 1120,1360 1060,1300 1020,1160")} fill="url(#hatch)" />
      <path d={polygon("A", "1030,1200 1110,1220 1115,1290 1080,1320")} fill="#97d3b6" />
      <path d={polygon("E", "330,1190 470,1185 480,1290 470,1380 360,1360")} fill="url(#hatch)" stroke="#f0b9b4" strokeWidth="2" />
      <g fill="#acd0a0" stroke="#7f5866" strokeWidth="5" strokeLinejoin="round">
        <path d={polygon("A", "820,915 880,985 950,1060 967,1115 940,1130 880,1128 850,1140 800,1128 762,1128 800,1010")} />
        <path d={polygon("A", "890,1142 975,1137 990,1220 1015,1318 970,1335 925,1388 908,1370 905,1220")} />
      </g>
      <path d={polygon("A", "800,1060 830,1030 850,1090 780,1115")} fill="#f3e6c8" />
      <path d={join(MUD, polygon)} fill="url(#mud)" />
      <path d={join(WATER, polygon)} fill="#aad3df" />
      <path d={rivers} stroke="#a3cddc" strokeWidth="8" {...line} />
      <path d={rivers} stroke="#7fa6c4" strokeWidth="2" strokeDasharray="2 9" {...line} />
      <g {...line}>
        <path d={join(COAST, curve)} stroke="#8fb98e" strokeWidth="9" opacity="0.8" />
        <path d={join(COAST, curve)} stroke="#6a8372" strokeWidth="3" strokeDasharray="16 4" />
        <path d={join(BOUNDARY, curve)} stroke="#b197b3" strokeWidth="4.5" opacity="0.45" />
        <path d={join(BOUNDARY, curve)} stroke="#a98dac" strokeWidth="3" strokeDasharray="16 7" />
        <path d={streets} stroke="#bdb9b9" strokeWidth="6.2" />
        <path d={streets} stroke="#ffffff" strokeWidth="4.6" />
        <path d={avenues} stroke="#b9b6b6" strokeWidth="10" />
        <path d={avenues} stroke="#ffffff" strokeWidth="8" />
        <path d={tram} stroke="#77787a" strokeWidth="2.8" />
        <path d={tunnel} stroke="#ecb9c4" strokeWidth="12" />
        <path d={tunnel} stroke="#e57f92" strokeWidth="14" strokeDasharray="2 20" strokeLinecap="butt" />
        <path d={main} stroke="#aeb37c" strokeWidth="11" />
        <path d={main} stroke="#f7fabf" strokeWidth="8.8" />
        <path d={main} stroke="#c9ab9d" strokeWidth="2.4" strokeDasharray="1.5 9" />
        <path d={curve("C", "-20,1010 0,1060 60,1140 170,1210 225,1255")} stroke="#e892a2" strokeWidth="16" />
        <path d={curve("C", "130,1180 190,1270 205,1380")} stroke="#e892a2" strokeWidth="9" />
        <path d={curve("C", "225,1255 235,1310 200,1390")} stroke="#e892a2" strokeWidth="12" />
        <path d={wideRail} stroke="#5f5c62" strokeWidth="15" strokeLinecap="butt" />
        <path d={wideRail} stroke="#aaa6ac" strokeWidth="11" strokeLinecap="butt" />
        <path d={wideRail} stroke="#5f5c62" strokeWidth="5" strokeLinecap="butt" />
        <path d={wideRail} stroke="#b3afb5" strokeWidth="1.6" strokeLinecap="butt" />
        <path d={rail} stroke="#727173" strokeWidth="6.6" />
        <path d={rail} stroke="#dcdcdc" strokeWidth="2" strokeDasharray="12 12" strokeLinecap="butt" />
        <path d={join(PATHS, curve)} stroke="#4550e6" strokeWidth="2.4" strokeDasharray="1.5 6" />
        <path d={join(FERRIES, curve)} stroke="#7b79f0" strokeWidth="2.8" strokeDasharray="12 9" strokeLinecap="butt" />
      </g>
      {STATIONS.map(([x, y], i) => (
        <rect key={i} x={x - 6} y={y - 6} width="12" height="12" fill="#7981b0" />
      ))}
      <g fill="#3b3a2c" stroke="#f7fabf" strokeWidth="4" paintOrder="stroke" strokeLinejoin="round">
        {ROAD_NAMES.map(([name, tile, d, size], i) => (
          <g key={name}>
            <path id={`road-${i}`} d={curve(tile, d)} fill="none" stroke="none" />
            <text fontSize={size}>
              <textPath href={`#road-${i}`}>{name}</textPath>
            </text>
          </g>
        ))}
      </g>
      <g fontSize="21" fontStyle="italic" fill="#5b8fc7" stroke="#e3eef3" strokeWidth="3" paintOrder="stroke" textAnchor="middle">
        {WATER_NAMES.map(([name, x, y, a, w], i) => (
          <text key={i} transform={`translate(${x} ${y}) rotate(${a})`} textLength={w} lengthAdjust="spacingAndGlyphs">
            {name}
          </text>
        ))}
      </g>
      <text transform="translate(2518 1355) rotate(7)" fontSize="21" fill="#8a6a94" stroke="#f1e6ef" strokeWidth="3" paintOrder="stroke" textAnchor="middle" textLength="63">
        Dublin
      </text>
      <g fontSize="20" fontStyle="italic" fill="#b2252f" stroke="#ffffff" strokeWidth="3.5" paintOrder="stroke" textAnchor="middle">
        <text x="2205" y="957" textLength="103" lengthAdjust="spacingAndGlyphs">Dublin Port</text>
        <text x="2206" y="980">1</text>
        <text x="2237" y="1025" textLength="103" lengthAdjust="spacingAndGlyphs">Dublin Port</text>
        <text x="2238" y="1048">1</text>
      </g>
      <g fontSize="29" fontStyle="italic" fill="#2f9150" stroke="#e9fbe9" strokeWidth="3" paintOrder="stroke" textAnchor="middle">
        <text x="966" y="897" textLength="106">Phoenix</text>
        <text x="966" y="933.5" textLength="61">Park</text>
      </g>
      <g fill="#353535" stroke="#ffffff" strokeOpacity="0.75" strokeWidth="4" paintOrder="stroke" strokeLinejoin="round" textAnchor="middle">
        {PLACES.map(([name, x, y, w, size]) => (
          <text key={name} x={x} y={y} fontSize={size ?? 25} textLength={w} lengthAdjust="spacingAndGlyphs">
            {name}
          </text>
        ))}
      </g>
      <g fontSize="20" fill="#5c6b2b" stroke="none" textAnchor="middle" fontWeight="500">
        {SHIELDS.map(([name, x, y]) => (
          <g key={name}>
            <rect x={x - 33.5} y={y - 17} width="67" height="34" rx="3" fill="#f1f1d4" stroke="#cbd0a0" strokeWidth="2" />
            <text x={x} y={y + 7.5} textLength="47" lengthAdjust="spacingAndGlyphs">
              {name}
            </text>
          </g>
        ))}
      </g>
      <rect x="1975.5" y="540" width="56" height="40" rx="3" fill="#e9bccb" stroke="#cf8ea2" strokeWidth="2" />
      <text x="2003.5" y="571" fontSize="20" fill="#8b2f4c" textAnchor="middle" textLength="41">
        M50
      </text>
      {BIKES.map((b) => (
        <circle key={`${b.x}`} cx={b.x} cy={b.y} r={b.r} fill={b.fill} fillOpacity="0.95" />
      ))}
      <circle cx="2708" cy="1586" r="24" fill="#ffffff" fillOpacity="0.5" />
      <circle cx="2708" cy="1586" r="14.5" fill="#333333" />
      <circle cx="2708" cy="1579" r="2.6" fill="#d6e9ee" />
      <rect x="2705.6" y="1583.5" width="4.8" height="11.5" rx="2" fill="#d6e9ee" />
    </svg>
  );
}

/* ------------------------------------------------------------------ */
/* Emoji-like pictures                                                 */
/* ------------------------------------------------------------------ */

function ChartPicture({ className }: { className: string }) {
  return (
    <svg viewBox="0 0 48 56" preserveAspectRatio="none" className={className}>
      <rect width="48" height="56" fill="#a9b0b8" />
      <rect x="1" y="1" width="46" height="54" fill="#dfe7ef" />
      <path d="M1,10H47M1,19H47M1,28H47M1,37H47M1,46H47M12,1V55M24,1V55M36,1V55" stroke="#c9d8e6" strokeWidth="0.8" />
      <rect x="2.5" y="20" width="11" height="36" fill="#28b534" />
      <rect x="18.5" y="30" width="11" height="26" fill="#b51318" />
      <rect x="34.5" y="7" width="11" height="49" fill="#0b55b4" />
    </svg>
  );
}

function TargetPicture() {
  return (
    <svg viewBox="0 0 42 42" className="-mt-[2px] h-[38px] w-[42px]">
      <g transform="translate(17 24) rotate(-12)">
        <ellipse rx="15" ry="16" cx="-1" cy="1" fill="#7e1519" />
        <ellipse rx="14.5" ry="15.5" fill="#c41f25" />
        <ellipse rx="11.5" ry="12.5" fill="#f3f1f0" />
        <ellipse rx="8.5" ry="9.5" fill="#c41f25" />
        <ellipse rx="5.5" ry="6" fill="#f3f1f0" />
        <ellipse rx="2.8" ry="3.2" fill="#c41f25" />
      </g>
      <path d="M19,21 34,9" stroke="#d8b24a" strokeWidth="2" />
      <path d="M24,17 33,9" stroke="#2f9fb0" strokeWidth="4" strokeLinecap="round" />
      <path d="M31,11 32,3 36,1 36,6 41,4 40,9 42,11 34,13Z" fill="#57c2cc" />
    </svg>
  );
}

function BikePicture() {
  const spokes = [0, 30, 60, 90, 120, 150];
  return (
    <svg viewBox="815 364 88 61" className="mt-[12px] h-[61px] w-[88px]" fill="none">
      {[832.5, 884].map((cx) => (
        <g key={cx}>
          <circle cx={cx} cy="406" r="17" stroke="#060708" strokeWidth="2.5" />
          <circle cx={cx} cy="406" r="15.5" stroke="#6b6d70" strokeWidth="1.9" />
          {spokes.map((a) => (
            <path key={a} d={`M${cx - 14},406h28`} stroke="#5a5c60" strokeWidth="1" transform={`rotate(${a + 8} ${cx} 406)`} />
          ))}
        </g>
      ))}
      <circle cx="858" cy="409" r="5" stroke="#4e5055" strokeWidth="2" />
      <path d="M859,405 856,418M853,418h9" stroke="#9b9da0" strokeWidth="2" />
      <path d="M832,406 841,379H870L860,406 841,384M868,377 884,406H860" stroke="#1560bd" strokeWidth="3" strokeLinejoin="round" />
      <path d="M842,380 841,371 835,366 848,368" stroke="#4a4c50" strokeWidth="2" strokeLinecap="round" />
      <path d="M861,371C867,370 873,370 878,370L877,373 867,374Z" fill="#1d1f22" stroke="#505257" />
      <path d="M869,374V379" stroke="#85878b" strokeWidth="2" />
    </svg>
  );
}

function PinPicture() {
  return (
    <svg viewBox="0 0 24 42" className="-mt-[3px] h-[42px] w-[24px]">
      <path d="M11,16h2.6L12.8,41 12,42 11.3,41Z" fill="#b9bdc1" />
      <circle cx="12" cy="10.5" r="10" fill="#d92d2a" />
      <ellipse cx="9" cy="6.5" rx="3.6" ry="2.8" fill="#f58f84" />
    </svg>
  );
}

/* ------------------------------------------------------------------ */
/* Charts                                                              */
/* ------------------------------------------------------------------ */

const RATES: [string, number][] = [["0.6", 794.5], ["0.5", 924.5], ["0.4", 1054.5], ["0.3", 1184.8], ["0.2", 1315.5]];

function UtilisationLegend() {
  return (
    <svg viewBox="2752 540 400 900" className="block h-[900px] w-[400px]" fill="#fafafa">
      <defs>
        <linearGradient id="rate" x1="0" y1="0" x2="0" y2="1">
          <stop offset="0" stopColor="#a50f28" />
          <stop offset="0.1" stopColor="#d73027" />
          <stop offset="0.2" stopColor="#f46d43" />
          <stop offset="0.3" stopColor="#fdae61" />
          <stop offset="0.4" stopColor="#fee08b" />
          <stop offset="0.5" stopColor="#ffffbf" />
          <stop offset="0.6" stopColor="#d9ef8b" />
          <stop offset="0.7" stopColor="#a6d96a" />
          <stop offset="0.8" stopColor="#66bd63" />
          <stop offset="0.9" stopColor="#1f9651" />
          <stop offset="1" stopColor="#0d6639" />
        </linearGradient>
      </defs>
      <circle cx="2830" cy="578.8" r="16" fill="#72a560" />
      <g fontSize="21.5" stroke="#fafafa" strokeWidth="0.5">
        <text x="2870" y="589.5" textLength="211">Dublin Bikes Stations</text>
        <text x="2870" y="627" textLength="209">Recommended Hubs</text>
      </g>
      <rect x="2810.5" y="786.5" width="30" height="607" fill="url(#rate)" stroke="#444444" strokeWidth="2" />
      <g fontSize="21.5" stroke="#fafafa" strokeWidth="0.3">
        {RATES.map(([t, y]) => (
          <text key={t} x="2846" y={y} textLength="30">{t}</text>
        ))}
      </g>
      <text transform="translate(2909 1208) rotate(-90)" fontSize="25" textLength="235">Bike Utilisation Rate</text>
    </svg>
  );
}

const BARS: { name: string; width: number; label: number; fill: string }[] = [
  { name: "Near Parnell Square", width: 254.5, label: 198, fill: "#fde74c" },
  { name: "Temple Bar Area", width: 251.5, label: 163, fill: "#31a387" },
  { name: "Trinity College Area", width: 249.5, label: 193, fill: "#36648b" },
  { name: "Dame Street Corridor", width: 248, label: 212, fill: "#46155f" },
  { name: "City Centre North", width: 247.5, label: 172, fill: "#430352" },
];

function LocationsChart() {
  return (
    <svg viewBox="3152 600 800 700" className="block h-[700px] w-[800px]" fill="#f0f2f6" stroke="none">
      <defs>
        <linearGradient id="score" x1="0" y1="0" x2="0" y2="1">
          <stop offset="0" stopColor="#fde74c" />
          <stop offset="0.11" stopColor="#b5de2b" />
          <stop offset="0.22" stopColor="#6ece58" />
          <stop offset="0.33" stopColor="#35b779" />
          <stop offset="0.44" stopColor="#1f9e89" />
          <stop offset="0.56" stopColor="#26828e" />
          <stop offset="0.67" stopColor="#31688e" />
          <stop offset="0.78" stopColor="#3e4989" />
          <stop offset="0.89" stopColor="#482878" />
          <stop offset="1" stopColor="#440154" />
        </linearGradient>
      </defs>
      {BARS.map((b, i) => (
        <g key={b.name}>
          <rect x="3447.5" y={678.5 + i * 88} width={b.width} height="70.5" fill={b.fill} stroke="#283442" strokeWidth="0.8" />
          <text x="3427.5" y={722.5 + i * 88} fontSize="21.5" textAnchor="end" textLength={b.label} stroke="#f0f2f6" strokeWidth="0.3">{b.name}</text>
        </g>
      ))}
      <g fontSize="21.5" textAnchor="middle" stroke="#f0f2f6" strokeWidth="0.3">
        <text x="3447" y="1151">0</text>
        <text x="3515.5" y="1151">20</text>
        <text x="3584.5" y="1151">40</text>
        <text x="3653" y="1151">60</text>
      </g>
      <text x="3580" y="1202" fontSize="25" textAnchor="middle" textLength="207">Hub Score (0-100)</text>
      <text transform="translate(3178 940) rotate(-90)" fontSize="25" textLength="100">Location</text>
      <text x="3760" y="732" fontSize="25" textLength="63">score</text>
      <rect x="3769" y="758" width="32" height="244" fill="url(#score)" />
      <g fontSize="21.5" stroke="#f0f2f6" strokeWidth="0.3">
        <text x="3814" y="765.5" textLength="24">74</text>
        <text x="3814" y="830.5" textLength="42">73.5</text>
        <text x="3814" y="895" textLength="24">73</text>
        <text x="3814" y="960" textLength="42">72.5</text>
      </g>
    </svg>
  );
}

function Trophy() {
  return (
    <svg viewBox="0 0 32 33" className="-mt-[3px] h-[33px] w-8">
      <defs>
        <linearGradient id="gold" x1="0" x2="1">
          <stop offset="0" stopColor="#8f5a14" />
          <stop offset="0.4" stopColor="#f5cf5a" />
          <stop offset="1" stopColor="#a0681a" />
        </linearGradient>
      </defs>
      <path d="M8,5H2C2,12 6,15 11,16M24,5H30C30,12 26,15 21,16" fill="none" stroke="#c08a2c" strokeWidth="1.8" />
      <path d="M8,1H24C24,12 21,18 17.5,20V25H14.5V20C11,18 8,12 8,1Z" fill="url(#gold)" />
      <path d="M11,25H21V29H11Z" fill="#d9a53c" />
      <path d="M7,28.5H25V33H7Z" fill="#7a3a16" />
    </svg>
  );
}

/* ------------------------------------------------------------------ */
/* Page                                                                */
/* ------------------------------------------------------------------ */

function Toolbar() {
  return (
    <header className="flex h-[102px] w-full shrink-0 items-start justify-between bg-[#3b3734]">
      <div className="flex h-[100px] w-[1199px] items-center pl-[22px]">
        <div className="flex gap-4">
          <span className="size-6 rounded-full bg-[#ff5f57]" />
          <span className="size-6 rounded-full bg-[#febc40]" />
          <span className="size-6 rounded-full bg-[#3ac652]" />
        </div>
        <svg viewBox="0 0 40 31" className="-mt-[2px] ml-[52px] h-[31px] w-10" fill="none" stroke="#bdb8b4" strokeWidth="2.6" strokeLinecap="round">
          <rect x="1.3" y="1.3" width="37" height="28" rx="4" />
          <path d="M14.5,1.5V29" />
          <path d="M5.5,8h4.500M5.5,12.5h4.500M5.5,17h4.500" strokeWidth="1.8" />
        </svg>
        <div className="ml-[19px] flex h-14 w-[153px] items-center rounded-[12px] bg-[#b75b7d] pl-[15px]">
          <svg viewBox="0 0 28 28" className="-mt-1 size-7" fill="#ffffff">
            <path d="M27.5,0.5C19,0.5 13.5,4 9.5,10L4,11 0.5,16 6,16.5 11.5,22 12,27.5 17,24 18,18.5C24,14.5 27.5,9 27.5,0.5Z" />
            <circle cx="18.5" cy="9.5" r="2.7" fill="#b75b7d" />
            <path d="M5,19C2,21 2,24 2,26.5C4.5,26.5 7.5,26 9,23.5" fill="none" stroke="#ffffff" strokeWidth="2" />
          </svg>
          <span className="ml-[11px] w-[63px] font-['Inter'] text-[26px] leading-8 font-bold tracking-[-1px] text-white">Anya</span>
          <svg viewBox="0 0 14 9" className="mt-[1px] ml-[12px] h-[9px] w-[14px]" fill="none" stroke="#dfb1c1" strokeWidth="2.6" strokeLinecap="round" strokeLinejoin="round">
            <path d="M1.5,1.5 7,7.5 12.5,1.5" />
          </svg>
        </div>
        <svg viewBox="0 0 16 28" className="-mt-[2px] ml-[39px] h-7 w-4" fill="none" stroke="#5f5b58" strokeWidth="2.8" strokeLinecap="round" strokeLinejoin="round">
          <path d="M14.5,1.5 2,14 14.5,26.5" />
        </svg>
        <svg viewBox="0 0 16 28" className="-mt-[2px] ml-[56px] h-7 w-4" fill="none" stroke="#5f5b58" strokeWidth="2.8" strokeLinecap="round" strokeLinejoin="round">
          <path d="M1.5,1.5 14,14 1.5,26.5" />
        </svg>
      </div>
      <div className="mt-[22px] flex h-14 w-[1663px] items-center justify-between rounded-[12px] border-2 border-[#4f4b48] bg-[#3a3633] pr-[12px] pl-[14px]">
        <svg viewBox="0 0 24 26" className="h-[26px] w-6" fill="none" stroke="#d5d1ce" strokeWidth="2.2" strokeLinecap="round">
          <rect x="1.2" y="1.2" width="21.6" height="16" rx="3" />
          <path d="M6,7h12M6,11.5h8M2,22h20" />
        </svg>
        <span className="font-['Inter'] text-[26px] leading-8 font-medium tracking-[-0.5px] whitespace-nowrap text-[#e4e1df]">localhost:8502</span>
        <svg viewBox="0 0 24 28" className="h-7 w-6" fill="none" stroke="#c5c1be" strokeWidth="2.4" strokeLinecap="round" strokeLinejoin="round">
          <path d="M21.5,15.5A10,10 0 1 1 12,5.5H15" />
          <path d="M11,1 15.5,5.5 11,10" />
        </svg>
      </div>
      <div className="flex h-[98px] w-[1196px] items-center justify-end pr-[18px]">
        <svg viewBox="3780 30 260 38" className="h-[38px] w-[260px]" fill="none" stroke="#bdb8b4" strokeWidth="2.6" strokeLinecap="round" strokeLinejoin="round">
          <circle cx="3797.5" cy="49" r="15.8" />
          <path d="M3797.5,41.5V56M3791.5,51 3797.5,56.8 3803.5,51" />
          <path d="M3867,42H3862Q3859.2,42 3859.2,45V63Q3859.2,65.8 3862,65.8H3883Q3885.8,65.8 3885.8,63V45Q3885.8,42 3883,42H3878M3872.5,53V32M3866.5,37 3872.5,31.5 3878.5,37" />
          <path d="M3945.5,36.5V61M3933.5,48.5H3957.5" strokeWidth="3" />
          <path d="M4011.5,57.5H4009Q4005.2,57.5 4005.2,54V36Q4005.2,32.5 4009,32.5H4026Q4029.5,32.5 4029.5,36V39" />
          <rect x="4013.2" y="40" width="24.8" height="24.8" rx="4" />
        </svg>
      </div>
    </header>
  );
}

const FACTORS = [
  "• Transport connectivity (35%)",
  "• Bike demand patterns (25%)",
  "• Infrastructure gaps (20%)",
  "• Accessibility factors (20%)",
];

function Sidebar() {
  return (
    <aside className="flex w-[654px] shrink-0 flex-col bg-[#262730] pr-[32px] pl-[14px] text-[#fafafa]">
      <div className="mt-[36px] flex h-6 justify-end pr-[4px]">
        <svg viewBox="0 0 24 24" className="size-6" stroke="#fafafa" strokeWidth="3">
          <path d="M1.5,1.5 22.5,22.5M22.5,1.5 1.5,22.5" />
        </svg>
      </div>
      <div className="mt-[145px] flex h-12 items-center">
        <TargetPicture />
        <span className="ml-[8px] text-[32px] leading-[48px] font-bold tracking-[-0.5px] whitespace-nowrap">Methodology</span>
      </div>
      <div className="mt-[11px] flex flex-col text-[29px] leading-[82px] tracking-[-0.17px] whitespace-nowrap">
        <span>Algorithm considers:</span>
        {FACTORS.map((f) => (
          <span key={f}>{f}</span>
        ))}
      </div>
      <div className="mt-[21px] h-10 text-[25px] leading-10">Minimum Hub Score</div>
      <div className="mt-[7px] flex h-8 justify-center font-['Liberation_Mono'] text-[28px] leading-8 text-[#ff4b4b]">70</div>
      <div className="mt-[3px] flex h-6 items-center">
        <div className="h-2 flex-1 rounded-l-full bg-[#ff4b4b]" />
        <div className="size-6 rounded-full bg-[#ff4b4b]" />
        <div className="h-2 flex-1 rounded-r-full bg-[#494a53]" />
      </div>
      <div className="mt-[19px] flex h-8 justify-between font-['Liberation_Mono'] text-[28px] leading-8">
        <span>60</span>
        <span>80</span>
      </div>
      <div className="mt-[39px] h-10 text-[25px] leading-10">Transport Integration</div>
      <div className="mt-[12px] flex h-[81px] items-center gap-4 rounded-[16px] bg-[#0e1117] pr-[31px] pl-[18px]">
        <Chip name="Bus" />
        <Chip name="Luas" />
        <svg viewBox="0 0 30 30" className="ml-auto size-[30px]">
          <circle cx="15" cy="15" r="15" fill="#808495" />
          <path d="M9.5,9.5 20.5,20.5M20.5,9.5 9.5,20.5" stroke="#0e1117" strokeWidth="3" />
        </svg>
        <svg viewBox="0 0 22 14" className="ml-[6px] h-[14px] w-[22px]" fill="none" stroke="#fafafa" strokeWidth="4" strokeLinecap="round" strokeLinejoin="round">
          <path d="M2.5,3 11,11 19.5,3" />
        </svg>
      </div>
    </aside>
  );
}

function Chip({ name }: { name: string }) {
  return (
    <div className="flex h-14 items-center rounded-[8px] bg-[#ff4b4b] pr-[17px] pl-[16px] text-white">
      <span className="-mt-[2px] text-[29px] leading-[54px] tracking-[-0.5px]">{name}</span>
      <svg viewBox="0 0 16 16" className="ml-[19px] size-4" stroke="#ffffff" strokeWidth="3">
        <path d="M1,1 15,15M15,1 1,15" />
      </svg>
    </div>
  );
}

function Metric({ label, value, delta }: { label: ReactNode; value: string; delta: string }) {
  return (
    <div className="flex flex-col items-start whitespace-nowrap">
      <span className="h-10 text-[25px] leading-10 tracking-[0.05px]">{label}</span>
      <span className="mt-[7px] h-[80px] text-[65px] leading-[80px] tracking-[-0.25px] [-webkit-text-stroke:0px]">{value}</span>
      <div className="mt-[12px] flex h-12 items-center text-[#21b14b]">
        <svg viewBox="0 0 32 32" className="size-8 shrink-0" fill="none" stroke="#21b14b" strokeWidth="3">
          <path d="M18,28V5M6.5,16 18,4.5 29.5,16" />
        </svg>
        <span className="ml-[10px] text-[28.5px] leading-[48px] tracking-[0.12px]">{delta}</span>
      </div>
    </div>
  );
}

export default function App() {
  return (
    <div className="flex h-[2244px] w-[4058px] flex-col overflow-hidden bg-[#0e1117] font-['Noto_Sans_CJK_JP',sans-serif] text-[#fafafa] [-webkit-text-stroke:0.5px]">
      <Toolbar />
      <div className="h-px shrink-0 bg-black" />
      <div className="h-[3px] shrink-0 bg-linear-to-r from-[#ff5a50] to-[#fffa80]" />
      <div className="flex min-h-0 flex-1">
        <Sidebar />
        <main className="flex flex-1 flex-col">
          <div className="flex h-[69px] justify-end pt-[30px] pr-[20px]">
            <svg viewBox="0 0 8 28" className="h-7 w-2" fill="#fafafa">
              <circle cx="4" cy="4" r="3.3" />
              <circle cx="4" cy="14" r="3.3" />
              <circle cx="4" cy="24" r="3.3" />
            </svg>
          </div>
          <h1 className="mt-[147px] ml-[161px] flex h-[120px] items-center">
            <BikePicture />
            <span className="ml-[16px] text-[79px] leading-[120px] font-bold tracking-[-0.3px]">MobiFlow</span>
          </h1>
          <div className="flex h-[978px] pl-[160px]">
            <section className="flex w-[1978px] flex-col pl-[7px]">
              <h3 className="mt-[32px] h-[48px] text-[30px] leading-[48px] font-bold tracking-[-0.7px]">Dublin Mobility Hub</h3>
              <div className="mt-[28px] ml-[33px]"><DublinMap /></div>
            </section>
            <section className="-ml-[40px] w-[400px] shrink-0 pt-[98px]"><UtilisationLegend /></section>
            <section className="w-[800px] shrink-0 pt-[92px]">
              <h3 className="flex h-12 items-center pl-[5px]">
                <Trophy />
                <span className="ml-[6px] text-[28.5px] leading-[48px] font-bold whitespace-nowrap">Top Locations</span>
              </h3>
              <div className="mt-[18px]"><LocationsChart /></div>
            </section>
          </div>
          <h2 className="mt-[305px] ml-[164px] flex h-[72px] items-center">
            <ChartPicture className="-mt-[4px] h-14 w-12" />
            <span className="ml-[14px] text-[51px] leading-[72px] font-bold tracking-[-1.5px] [-webkit-text-stroke:0px]">Key Metrics</span>
          </h2>
          <div className="mt-[36px] mr-[153px] ml-[160px] grid grid-cols-3 gap-8">
            <Metric label="Top Recommended Location" value="Parnell Square" delta="74/100" />
            <Metric label={<>Estimated CO<sub className="text-[17px]">2</sub> Reduction</>} value="156 tonnes/year" delta="+24% vs baseline" />
            <Metric label="Projected Users" value="45,000/year" delta="First 12 months" />
          </div>
          <div className="mt-[27px] mr-[153px] ml-[160px] grid grid-cols-2 gap-8">
            <button className="flex h-[77px] w-[334px] items-center rounded-[16px] border-2 border-[#41444c] bg-[#131720] pl-[28px]">
              <ChartPicture className="-mt-[3px] h-10 w-[34px]" />
              <span className="-mt-[3px] ml-[11px] text-[29px] leading-[70px] whitespace-nowrap">Download Report</span>
            </button>
            <button className="flex h-[77px] w-[323px] items-center rounded-[16px] border-2 border-[#41444c] bg-[#131720] pl-[32px]">
              <PinPicture />
              <span className="-mt-[3px] ml-[15px] text-[29px] leading-[70px] whitespace-nowrap">Export Locations</span>
            </button>
          </div>
        </main>
      </div>
    </div>
  );
}
